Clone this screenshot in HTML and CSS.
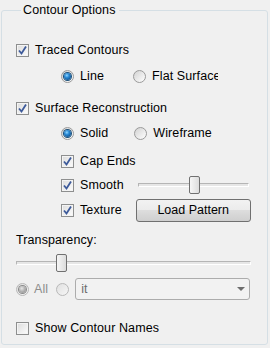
FILE: index.html
```html
<!DOCTYPE html>
<html>
<head>
   <meta http-equiv="Content-Type" content="text/html; charset=UTF-8" />
   <link rel="stylesheet" href="styles.css">
</head>
<body>

<fieldset class="group">
    <legend>Contour Options</legend>

    <div class="row r-traced">
        <span class="check on"><svg width="13" height="13" viewBox="0 0 13 13"><path d="M3 6.5 L5.5 9.5 L10 2.5" /></svg></span>
        <span class="label">Traced Contours</span>
    </div>
    <div class="row sub r-line">
        <span class="radio on"><i></i></span><span class="label">Line</span>
        <span class="radio second"><i></i></span><span class="label clip">Flat Surface</span>
    </div>

    <div class="row r-surface">
        <span class="check on"><svg width="13" height="13" viewBox="0 0 13 13"><path d="M3 6.5 L5.5 9.5 L10 2.5" /></svg></span>
        <span class="label">Surface Reconstruction</span>
    </div>
    <div class="row sub r-solid">
        <span class="radio on"><i></i></span><span class="label">Solid</span>
        <span class="radio second"><i></i></span><span class="label">Wireframe</span>
    </div>
    <div class="row sub r-cap">
        <span class="check on"><svg width="13" height="13" viewBox="0 0 13 13"><path d="M3 6.5 L5.5 9.5 L10 2.5" /></svg></span>
        <span class="label">Cap Ends</span>
    </div>
    <div class="row sub r-smooth">
        <span class="check on"><svg width="13" height="13" viewBox="0 0 13 13"><path d="M3 6.5 L5.5 9.5 L10 2.5" /></svg></span>
        <span class="label">Smooth</span>
        <div class="slider short"><div class="track"></div><div class="thumb" style="left: 51px"></div></div>
    </div>
    <div class="row sub r-texture">
        <span class="check on"><svg width="13" height="13" viewBox="0 0 13 13"><path d="M3 6.5 L5.5 9.5 L10 2.5" /></svg></span>
        <span class="label">Texture</span>
        <button class="button">Load Pattern</button>
    </div>

    <div class="row r-transp"><span class="text">Transparency:</span></div>
    <div class="row r-slider">
        <div class="slider long"><div class="track"></div><div class="thumb" style="left: 40px"></div></div>
    </div>

    <div class="row r-all">
        <span class="radio on disabled"><i></i></span><span class="label dim">All</span>
        <span class="radio disabled r-it"><i></i></span>
        <div class="combo"><span>it</span><span class="arrow"></span></div>
    </div>

    <div class="row r-show">
        <span class="check"></span>
        <span class="label">Show Contour Names</span>
    </div>
</fieldset>

</body>
</html>
```

FILE: styles.css
```css
* {
    box-sizing: border-box;
}
body {
    margin: 0;
    background-color: #f0f0f0;
    font-family: "Liberation Sans", Arial, sans-serif;
    font-size: 12px;
    color: #000;
}

fieldset.group {
    margin: 3px 2px 0 1px;
    height: 342px;
    padding: 0 0 0 14px;
    border: 1px solid #d5dfe5;
    border-radius: 3px;
}
fieldset.group legend {
    margin-left: 5px;
    padding: 0 3px 0 2px;
    font-size: 12.5px;
    line-height: 14px;
    letter-spacing: 0.1px;
}

div.row {
    display: flex;
    align-items: center;
    height: 24px;
}
div.sub {
    padding-left: 45px;
}
div.r-traced  { margin-top: 21px; }
div.r-line    { margin-top: 2px; }
div.r-surface { margin-top: 8px; }
div.r-solid   { margin-top: 1px; }
div.r-cap     { margin-top: 4px; }
div.r-smooth  { margin-top: 0; }
div.r-texture { margin-top: 1px; }
div.r-transp  { margin-top: 6px; }
div.r-slider  { margin-top: -1px; }
div.r-all     { margin-top: 2px; }
div.r-show    { margin-top: 15px; }

span.label, span.text {
    white-space: nowrap;
    font-size: 12.5px;
    letter-spacing: 0.1px;
}
span.label {
    margin-left: 6px;
}
span.label.clip {
    width: 66px;
    overflow: hidden;
}
span.label.dim {
    color: #8d8d8d;
    margin-left: 5px;
}

/* checkbox */
span.check {
    flex: none;
    width: 13px;
    height: 13px;
    border: 1px solid #8e8f8f;
    background: linear-gradient(135deg, #dcdcdc, #fdfdfd);
    box-shadow: inset 0 0 0 1px #f4f4f4;
    position: relative;
}
span.check svg {
    position: absolute;
    left: -1px;
    top: -1px;
}
span.check svg path {
    fill: none;
    stroke: #3d5a9a;
    stroke-width: 1.8;
}

/* radio */
span.radio {
    flex: none;
    width: 13px;
    height: 13px;
    border-radius: 50%;
    border: 1px solid #9a9a9a;
    background: linear-gradient(135deg, #d2d2d2, #ffffff);
    display: flex;
    align-items: center;
    justify-content: center;
}
span.radio i {
    display: block;
    width: 7px;
    height: 7px;
    border-radius: 50%;
    visibility: hidden;
}
span.radio.on i {
    visibility: visible;
    background: radial-gradient(circle at 40% 35%, #8fd6ff 0, #2a8ad6 35%, #0c4f8c 80%);
    box-shadow: 0 0 0 1px #1b4f78;
}
span.radio.disabled {
    border-color: #b8b8b8;
    background: linear-gradient(135deg, #e0e0e0, #f6f6f6);
}
span.radio.on.disabled i {
    background: radial-gradient(circle at 40% 35%, #e6e6e6 0, #b0b0b0 50%, #909090 90%);
    box-shadow: 0 0 0 1px #8a8a8a;
}
div.r-line span.radio.second  { margin-left: 29px; }
div.r-solid span.radio.second { margin-left: 26px; }
span.radio.r-it {
    margin-left: 8px;
}

/* slider */
div.slider {
    position: relative;
    height: 22px;
}
div.slider.short {
    width: 111px;
    margin-left: 14px;
}
div.slider.long {
    width: 235px;
}
div.slider .track {
    position: absolute;
    left: 0;
    right: 0;
    top: 9px;
    height: 4px;
    border-top: 1px solid #b5b5b5;
    border-left: 1px solid #b5b5b5;
    border-bottom: 1px solid #ffffff;
    border-right: 1px solid #ffffff;
    background: #e6e6e6;
}
div.slider .thumb {
    position: absolute;
    top: 2px;
    width: 11px;
    height: 18px;
    border: 1px solid #707070;
    border-radius: 2px;
    background: linear-gradient(to right, #f6f6f6, #dcdcdc);
}

/* button */
button.button {
    margin-left: 14px;
    width: 115px;
    height: 23px;
    border: 1px solid #707070;
    border-radius: 3px;
    background: linear-gradient(#f2f2f2 0, #ebebeb 50%, #dddddd 50%, #cfcfcf 100%);
    font-family: "Liberation Sans", Arial, sans-serif;
    font-size: 12.5px;
    color: #000;
    padding: 0;
}

/* combobox */
div.combo {
    margin-left: 6px;
    width: 175px;
    height: 22px;
    border: 1px solid #acacac;
    border-radius: 3px;
    background: #f2f2f2;
    display: flex;
    align-items: center;
    justify-content: space-between;
    padding: 0 4px 0 5px;
    color: #6d6d6d;
    font-size: 12.5px;
}
div.combo .arrow {
    width: 0;
    height: 0;
    border-left: 4px solid transparent;
    border-right: 4px solid transparent;
    border-top: 4px solid #6d6d6d;
}
```
